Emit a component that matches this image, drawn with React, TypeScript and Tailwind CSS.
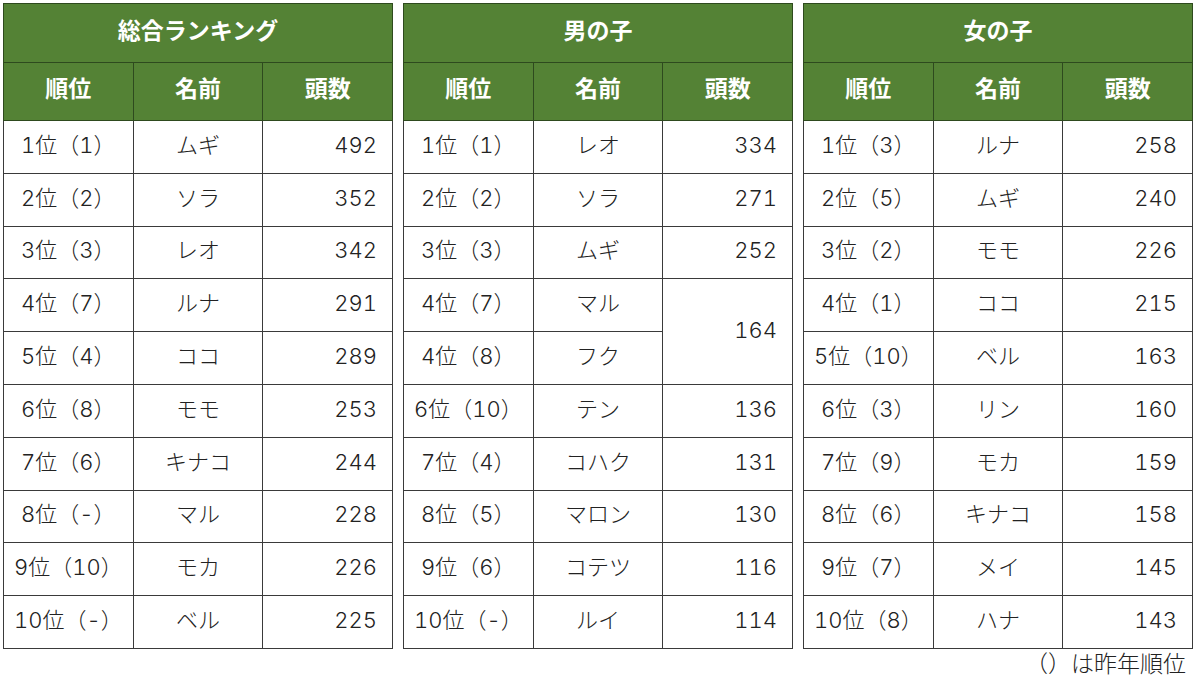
type Row = { rank: string; name: string; count?: number; span?: number };

interface Ranking {
  title: string;
  rows: Row[];
}

const rankings: Ranking[] = [
  {
    title: "総合ランキング",
    rows: [
      { rank: "1位（1）", name: "ムギ", count: 492 },
      { rank: "2位（2）", name: "ソラ", count: 352 },
      { rank: "3位（3）", name: "レオ", count: 342 },
      { rank: "4位（7）", name: "ルナ", count: 291 },
      { rank: "5位（4）", name: "ココ", count: 289 },
      { rank: "6位（8）", name: "モモ", count: 253 },
      { rank: "7位（6）", name: "キナコ", count: 244 },
      { rank: "8位（-）", name: "マル", count: 228 },
      { rank: "9位（10）", name: "モカ", count: 226 },
      { rank: "10位（-）", name: "ベル", count: 225 },
    ],
  },
  {
    title: "男の子",
    rows: [
      { rank: "1位（1）", name: "レオ", count: 334 },
      { rank: "2位（2）", name: "ソラ", count: 271 },
      { rank: "3位（3）", name: "ムギ", count: 252 },
      { rank: "4位（7）", name: "マル", count: 164, span: 2 },
      { rank: "4位（8）", name: "フク" },
      { rank: "6位（10）", name: "テン", count: 136 },
      { rank: "7位（4）", name: "コハク", count: 131 },
      { rank: "8位（5）", name: "マロン", count: 130 },
      { rank: "9位（6）", name: "コテツ", count: 116 },
      { rank: "10位（-）", name: "ルイ", count: 114 },
    ],
  },
  {
    title: "女の子",
    rows: [
      { rank: "1位（3）", name: "ルナ", count: 258 },
      { rank: "2位（5）", name: "ムギ", count: 240 },
      { rank: "3位（2）", name: "モモ", count: 226 },
      { rank: "4位（1）", name: "ココ", count: 215 },
      { rank: "5位（10）", name: "ベル", count: 163 },
      { rank: "6位（3）", name: "リン", count: 160 },
      { rank: "7位（9）", name: "モカ", count: 159 },
      { rank: "8位（6）", name: "キナコ", count: 158 },
      { rank: "9位（7）", name: "メイ", count: 145 },
      { rank: "10位（8）", name: "ハナ", count: 143 },
    ],
  },
];

// Inter for the wide Latin digits, Noto CJK for kana/kanji
const font = { fontFamily: 'Inter, "Noto Sans CJK JP", sans-serif' };

const cell = "border border-[#3a3a3a] pb-[3px] text-[22px] font-light tabular-nums text-[#222222]";

const RankingTable = ({ data }: { data: Ranking }) => (
  <table className="w-[390px] table-fixed border-collapse border border-[#3a3a3a]">
    <thead>
      <tr className="h-[59px] bg-[#548235]">
        <th colSpan={3} className="border border-[#2e4a1e] pb-[4px] text-[23px] font-bold text-white">
          {data.title}
        </th>
      </tr>
      <tr className="h-[58px] bg-[#548235]">
        {["順位", "名前", "頭数"].map((h) => (
          <th key={h} className="w-[130px] border border-[#2e4a1e] pb-[4px] text-[23px] font-bold text-white">
            {h}
          </th>
        ))}
      </tr>
    </thead>
    <tbody>
      {data.rows.map((row) => (
        <tr key={row.rank + row.name} className="h-[52.8px] bg-white">
          <td className={`${cell} text-center whitespace-nowrap`}>{row.rank}</td>
          <td className={`${cell} text-center`}>{row.name}</td>
          {row.count !== undefined && (
            <td rowSpan={row.span ?? 1} className={`${cell} pr-[15px] text-right`}>
              {row.count}
            </td>
          )}
        </tr>
      ))}
    </tbody>
  </table>
);

export default function App() {
  return (
    <div className="h-[681px] w-[1200px] bg-white pl-[3px] pt-[3px]" style={font}>
      <div className="flex gap-[10px]">
        {rankings.map((r) => (
          <RankingTable key={r.title} data={r} />
        ))}
      </div>
      <p className="pr-[14px] text-right text-[23px] font-light leading-[30px] text-[#222222]">（）は昨年順位</p>
    </div>
  );
}
